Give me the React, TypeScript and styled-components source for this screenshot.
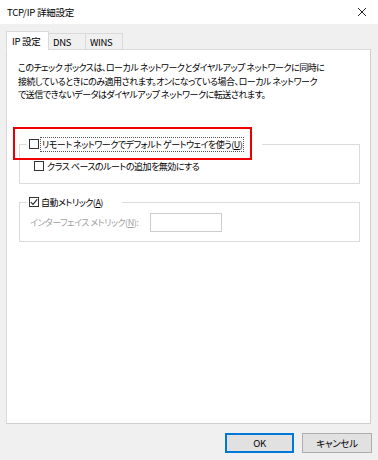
import styled, { createGlobalStyle } from "styled-components";

const GlobalStyle = createGlobalStyle`
  html, body {
    margin: 0;
    padding: 0;
    background: #f0f0f0;
  }
  body {
    font-family: "Noto Sans CJK JP", "Noto Sans", sans-serif;
    font-feature-settings: "palt";
    font-size: 9px;
    letter-spacing: -0.5px;
    color: #000;
  }
`;

const App = () => {
  return (
    <>
      <GlobalStyle />
      <StyledWindow>
        <StyledTitleBar>
          <StyledTitle>TCP/IP 詳細設定</StyledTitle>
          <StyledClose aria-label="閉じる">
            <svg width="10" height="10" viewBox="0 0 10 10">
              <path d="M1 1 L9 9 M9 1 L1 9" stroke="#222" strokeWidth="1" />
            </svg>
          </StyledClose>
        </StyledTitleBar>

        <StyledBody>
          <StyledTabStrip>
            <StyledTab $active $width={43}>IP 設定</StyledTab>
            <StyledTab $width={38}>DNS</StyledTab>
            <StyledTab $width={38}>WINS</StyledTab>
          </StyledTabStrip>

          <StyledPanel>
            <StyledNote>
              このチェック ボックスは、ローカル ネットワークとダイヤルアップ ネットワークに同時に
              <br />
              接続しているときにのみ適用されます。オンになっている場合、ローカル ネットワーク
              <br />
              で送信できないデータはダイヤルアップ ネットワークに転送されます。
            </StyledNote>

            <StyledGroup>
              <StyledLegend $width={235}>
                <StyledCheck />
                <StyledFocus>
                  リモート ネットワークでデフォルト ゲートウェイを使う(<u>U</u>)
                </StyledFocus>
              </StyledLegend>
              <StyledGroupBody $pad="9px 0 10px 14px">
                <StyledRow>
                  <StyledCheck />
                  <span>クラス ベースのルートの追加を無効にする</span>
                </StyledRow>
              </StyledGroupBody>
            </StyledGroup>

            <StyledGroup $top={12}>
              <StyledLegend $width={95}>
                <StyledCheck>
                  <svg width="8" height="8" viewBox="0 0 8 8">
                    <path d="M0.8 4.2 L3 6.4 L7.2 1.4" fill="none" stroke="#222" strokeWidth="1.1" />
                  </svg>
                </StyledCheck>
                <span>
                  自動メトリック(<u>A</u>)
                </span>
              </StyledLegend>
              <StyledGroupBody $pad="4px 0 9px 10px">
                <StyledRow>
                  <StyledDisabledLabel>
                    インターフェイス メトリック(<u>N</u>):
                  </StyledDisabledLabel>
                  <StyledInput disabled />
                </StyledRow>
              </StyledGroupBody>
            </StyledGroup>
          </StyledPanel>

          <StyledFooter>
            <StyledButton $primary $width={69}>OK</StyledButton>
            <StyledButton $width={70}>キャンセル</StyledButton>
          </StyledFooter>
        </StyledBody>

        <StyledHighlight />
      </StyledWindow>
    </>
  );
};

export default App;

const StyledWindow = styled.div`
  position: relative;
  width: 378px;
  height: 460px;
  background: #f0f0f0;
  display: flex;
  flex-direction: column;
  overflow: hidden;
`;

const StyledTitleBar = styled.div`
  height: 24px;
  background: #fff;
  display: flex;
  align-items: center;
  justify-content: space-between;
  padding: 0 7px;
`;

const StyledTitle = styled.span`
  font-size: 9.5px;
  letter-spacing: -0.2px;
`;

const StyledClose = styled.span`
  display: flex;
  margin-right: 4px;
`;

const StyledBody = styled.div`
  flex: 1;
  display: flex;
  flex-direction: column;
  padding: 7px 6px 0 6px;
`;

const StyledTabStrip = styled.div`
  display: flex;
  align-items: flex-end;
  height: 19px;
  position: relative;
  z-index: 1;
  margin-bottom: -1px;
`;

const StyledTab = styled.div<{ $active?: boolean; $width: number }>`
  width: ${(p) => p.$width}px;
  height: ${(p) => (p.$active ? 19 : 17)}px;
  box-sizing: border-box;
  padding: 0 0 0 ${(p) => (p.$active ? 5 : 4)}px;
  display: flex;
  align-items: center;
  font-size: 9.5px;
  letter-spacing: -0.3px;
  background: ${(p) => (p.$active ? "#fff" : "#f0f0f0")};
  border: 1px solid #d9d9d9;
  border-bottom: 1px solid ${(p) => (p.$active ? "#fff" : "#d9d9d9")};
  & + & {
    margin-left: -1px;
  }
`;

const StyledPanel = styled.div`
  height: 375px;
  margin-right: 1px;
  box-sizing: border-box;
  background: #fff;
  border: 1px solid #d9d9d9;
  border-right: 1px solid #cfcfcf;
  border-bottom: 1px solid #cfcfcf;
  padding: 11px 12px 0 12px;
  display: flex;
  flex-direction: column;
`;

const StyledNote = styled.p`
  margin: 0 0 0 -1px;
  line-height: 13.5px;
  white-space: nowrap;
`;

const StyledGroup = styled.fieldset<{ $top?: number }>`
  margin: ${(p) => p.$top ?? 36}px 0 0 0;
  width: 341px;
  box-sizing: border-box;
  padding: 0;
  border: 1px solid #dcdcdc;
  min-inline-size: 0;
`;

const StyledGroupBody = styled.div<{ $pad: string }>`
  padding: ${(p) => p.$pad};
`;

const StyledLegend = styled.legend<{ $width: number }>`
  margin-left: 7px;
  padding: 0 0 0 2px;
  width: ${(p) => p.$width}px;
  box-sizing: border-box;
  display: flex;
  align-items: center;
  gap: 2px;
  height: 13px;
  line-height: 13px;
`;

const StyledCheck = styled.span`
  width: 10px;
  height: 10px;
  box-sizing: border-box;
  border: 1px solid #333;
  background: #fff;
  display: inline-flex;
  align-items: center;
  justify-content: center;
  flex-shrink: 0;
`;

const StyledFocus = styled.span`
  outline: 1px dotted #555;
  outline-offset: 0;
  padding: 0 1px;
  white-space: nowrap;
`;

const StyledRow = styled.div`
  display: flex;
  align-items: center;
  gap: 3px;
  line-height: 13px;
  white-space: nowrap;
`;

const StyledDisabledLabel = styled.span`
  color: #a0a0a0;
  width: 117px;
`;

const StyledInput = styled.input`
  width: 72px;
  height: 19px;
  box-sizing: border-box;
  border: 1px solid #cccccc;
  background: #fff;
  margin: 0;
  padding: 0;
`;

const StyledFooter = styled.div`
  display: flex;
  justify-content: flex-end;
  gap: 8px;
  margin-top: 9px;
`;

const StyledButton = styled.button<{ $primary?: boolean; $width: number }>`
  width: ${(p) => p.$width}px;
  height: 20px;
  box-sizing: border-box;
  background: #e1e1e1;
  border: 1px solid ${(p) => (p.$primary ? "#0078d7" : "#adadad")};
  box-shadow: ${(p) => (p.$primary ? "inset 0 0 0 1px #0078d7" : "none")};
  font-family: inherit;
  font-size: 9.5px;
  letter-spacing: -0.3px;
  font-feature-settings: "palt";
  color: #000;
  padding: 0;
`;

const StyledHighlight = styled.div`
  position: absolute;
  left: 13px;
  top: 127px;
  width: 239px;
  height: 33px;
  box-sizing: border-box;
  border: 2px solid #ee0000;
  pointer-events: none;
`;
